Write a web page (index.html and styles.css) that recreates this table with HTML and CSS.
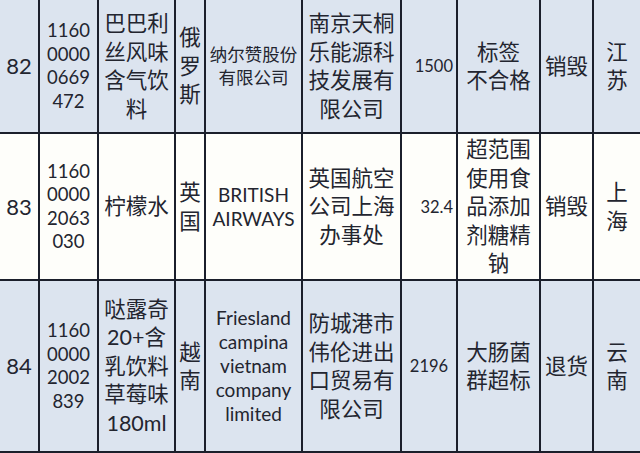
FILE: index.html
```html
<!DOCTYPE html>
<html lang="zh-CN">
<head>
<meta charset="utf-8">
<title>表</title>
<link rel="stylesheet" href="styles.css">
</head>
<body>
<div class="sheet">
  <div class="cell num blue">82</div>
  <div class="cell code blue">1160<br>0000<br>0669<br>472</div>
  <div class="cell zh blue">巴巴利<br>丝风味<br>含气饮<br>料</div>
  <div class="cell zh blue">俄<br>罗<br>斯</div>
  <div class="cell small blue">纳尔赞股份<br>有限公司</div>
  <div class="cell zh blue">南京天桐<br>乐能源科<br>技发展有<br>限公司</div>
  <div class="cell wt right blue">1500</div>
  <div class="cell zh blue">标签<br>不合格</div>
  <div class="cell zh blue">销毁</div>
  <div class="cell zh blue last">江<br>苏</div>

  <div class="cell num white">83</div>
  <div class="cell code white">1160<br>0000<br>2063<br>030</div>
  <div class="cell zh white">柠檬水</div>
  <div class="cell zh white">英<br>国</div>
  <div class="cell latin white">BRITISH<br>AIRWAYS</div>
  <div class="cell zh white">英国航空<br>公司上海<br>办事处</div>
  <div class="cell wt right white">32.4</div>
  <div class="cell zh white">超范围<br>使用食<br>品添加<br>剂糖精<br>钠</div>
  <div class="cell zh white">销毁</div>
  <div class="cell zh white last">上<br>海</div>

  <div class="cell num blue">84</div>
  <div class="cell code blue">1160<br>0000<br>2002<br>839</div>
  <div class="cell zh blue">哒露奇<br>20+含<br>乳饮料<br>草莓味<br>180ml</div>
  <div class="cell zh blue">越<br>南</div>
  <div class="cell latin blue">Friesland<br>campina<br>vietnam<br>company<br>limited</div>
  <div class="cell zh blue">防城港市<br>伟伦进出<br>口贸易有<br>限公司</div>
  <div class="cell wt blue">2196</div>
  <div class="cell zh blue">大肠菌<br>群超标</div>
  <div class="cell zh blue">退货</div>
  <div class="cell zh blue last">云<br>南</div>
</div>
</body>
</html>
```

FILE: styles.css
```css
html, body {
  margin: 0;
  padding: 0;
  background: #ffffff;
}

.sheet {
  display: grid;
  grid-template-columns: 40px 59px 77px 30px 97px 99px 56px 83px 53px 46px;
  grid-template-rows: 134px 147px 172px;
  width: 640px;
  font-family: "Lato", "Noto Sans CJK SC", sans-serif;
  font-weight: 400;
  color: #23252f;
}

.cell {
  box-sizing: border-box;
  border-right: 2px solid #1b1f2b;
  border-bottom: 2px solid #1b1f2b;
  display: flex;
  align-items: center;
  justify-content: center;
  text-align: center;
  white-space: nowrap;
  overflow: hidden;
}

.cell.last {
  border-right: none;
}

.blue {
  background: #dce4ef;
}

.white {
  background: #fefefa;
}

.num {
  font-size: 22px;
  line-height: 28px;
}

.code {
  font-size: 18.5px;
  line-height: 23.5px;
}

.zh {
  font-size: 21.5px;
  line-height: 28.5px;
}

.small {
  font-size: 17.5px;
  line-height: 23px;
}

.latin {
  font-size: 19px;
  line-height: 24px;
}

.wt {
  font-size: 16.5px;
  line-height: 24px;
}

.right {
  justify-content: flex-end;
  padding-right: 3px;
}
```
